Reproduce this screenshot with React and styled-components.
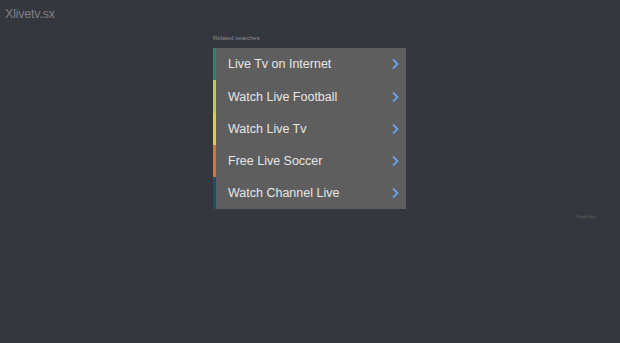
import styled, { createGlobalStyle } from "styled-components";

const Global = createGlobalStyle`
	html, body { margin: 0; padding: 0; background: #35373e; }
	body { font-family: "Liberation Sans", Arial, sans-serif; }
`;

// 전체 페이지
const Page = styled.div`
	width: 620px;
	height: 343px;
	background: #35373e;
	position: relative;
	overflow: hidden;
`;

const Logo = styled.div`
	padding: 7px 0 0 5px;
	font-size: 12.5px;
	line-height: 15px;
	color: #7d7f83;
	letter-spacing: -0.2px;
`;

const Main = styled.div`
	display: flex;
	flex-direction: column;
	margin: 12px 0 0 213px;
	width: 193px;
`;

const Caption = styled.div`
	font-size: 6px;
	line-height: 8px;
	color: #8a8c90;
	height: 14px;
`;

const List = styled.ul`
	list-style: none;
	margin: 0;
	padding: 0;
	background: #5e5e5e;
`;

const Row = styled.li`
	display: flex;
	align-items: center;
	justify-content: space-between;
	height: ${p => p.$h}px;
	border-left: 3px solid ${p => p.$color};
	padding: 0 7px 0 12px;
	color: #e6e6e6;
	font-size: 12.5px;
`;

const Tiny = styled.div`
	position: absolute;
	left: 577px;
	top: 215px;
	font-size: 3px;
	color: #6a6c70;
`;

const Chevron = () => (
	<svg width="8" height="12" viewBox="0 0 8 12">
		<path d="M2 1.5 L6.5 6 L2 10.5" fill="none" stroke="#6aa3e8" strokeWidth="1.8" />
	</svg>
);

const items = [
	{ label: "Live Tv on Internet", color: "#1f8a6c", h: 32 },
	{ label: "Watch Live Football", color: "#bfd12a", h: 33 },
	{ label: "Watch Live Tv", color: "#e8d21e", h: 32 },
	{ label: "Free Live Soccer", color: "#e8701a", h: 32 },
	{ label: "Watch Channel Live", color: "#15526b", h: 32 },
];

export default function App() {
	return (
		<Page>
			<Global />
			<Logo>Xlivetv.sx</Logo>
			<Main>
				<Caption>Related searches</Caption>
				<List>
					{items.map(it => (
						<Row key={it.label} $color={it.color} $h={it.h}>
							<span>{it.label}</span>
							<Chevron />
						</Row>
					))}
				</List>
			</Main>
			<Tiny>Privacy Policy</Tiny>
		</Page>
	);
}
